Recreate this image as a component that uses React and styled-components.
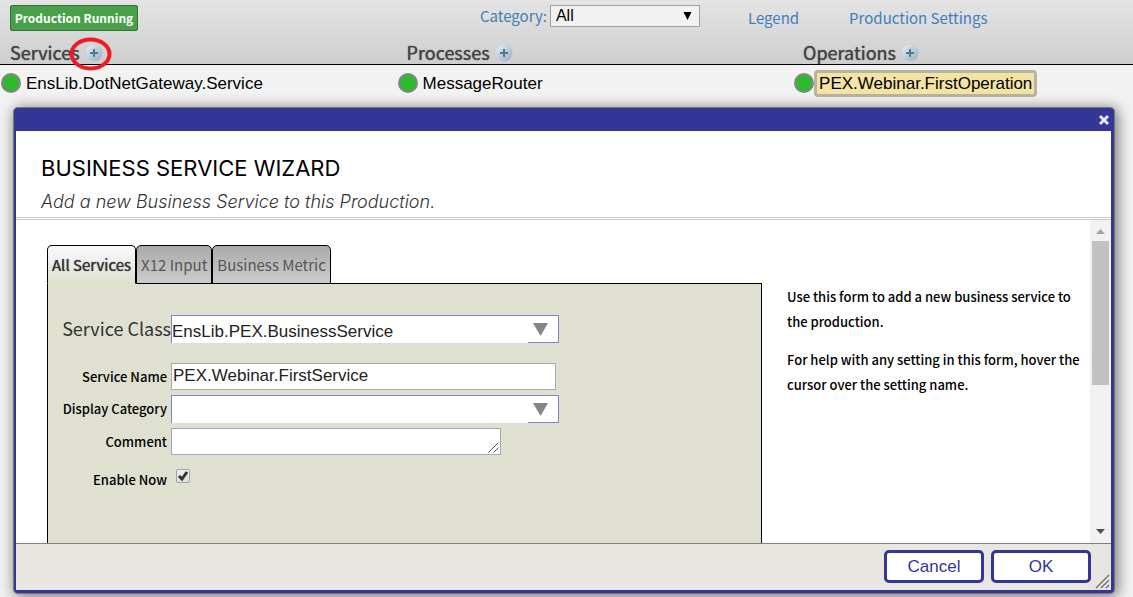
import styled, { createGlobalStyle } from "styled-components";

const colors = {
  navy: "#333695",
  link: "#3f7fb9",
  heading: "#444444",
  panel: "#dfe0d0",
  combo: "#8080cc",
};

const sourceSans = `"Noto Sans CJK SC", "Open Sans", sans-serif`;
const arial = `"Liberation Sans", Arial, sans-serif`;
const montserrat = `Inter, "Open Sans", sans-serif`;

const GlobalStyle = createGlobalStyle`
  * {
    box-sizing: border-box;
  }
  body {
    margin: 0;
    background: #f2f2f2;
    font-family: ${sourceSans};
    overflow: hidden;
  }
`;

const Page = styled.div`
  position: relative;
  height: 100vh;
`;

const Ribbon = styled.header`
  height: 65px;
  background: linear-gradient(#e4e4e4, #cecece);
  border-bottom: 1px solid #000;
`;

const Toolbar = styled.div`
  display: grid;
  grid-template-columns: 480fr 268fr 385fr;
  align-items: start;
  height: 40px;
  padding-top: 5px;
`;

const StatusButton = styled.button`
  width: 128px;
  height: 26px;
  margin-left: 10px;
  padding: 0;
  background: #48a148;
  border: 1px solid #3a6b3a;
  border-radius: 2px;
  color: #fff;
  font: bold 12px/24px ${sourceSans};
  white-space: nowrap;
`;

const Category = styled.div`
  display: flex;
  gap: 3px;
  color: ${colors.link};
  font-size: 15px;
  line-height: 22px;
`;

const CategorySelect = styled.span`
  position: relative;

  select {
    appearance: none;
    display: block;
    width: 150px;
    height: 22px;
    padding: 0 5px;
    background: #f2f2f2;
    border: 1px solid #a0a0a0;
    border-radius: 0;
    color: #000;
    font: 16px/20px ${arial};
  }
  svg {
    position: absolute;
    right: 8px;
    top: 7px;
    pointer-events: none;
  }
`;

const Links = styled.nav`
  display: flex;
  gap: 50px;
  line-height: 25px;
`;

const RibbonLink = styled.a`
  color: ${colors.link};
  font-size: 15px;
  text-decoration: none;
`;

const Columns = styled.div`
  display: grid;
  grid-template-columns: 35% 35% 30%;
`;

const ColumnTitle = styled.h2`
  position: relative;
  display: flex;
  align-items: center;
  gap: 4px;
  margin: 0;
  padding-left: 10px;
  color: ${colors.heading};
  font-size: 18px;
  font-weight: 400;
  line-height: 24px;
  text-shadow: 0 0 1px ${colors.heading};
`;

const AddButton = styled.button`
  display: flex;
  padding: 2px 0 0;
  background: none;
  border: 0;
`;

const Marker = styled.svg`
  position: absolute;
  left: 69px;
  top: -3px;
  pointer-events: none;
`;

const HostRow = styled.div`
  display: flex;
  align-items: center;
  height: 36px;
  padding-left: 1px;
`;

const Lamp = styled.span`
  width: 20px;
  height: 20px;
  background: #2dba2d;
  border: 2px solid #858585;
  border-radius: 50%;
`;

const HostName = styled.span`
  padding: 1px 2px 0;
  border: 3px solid ${(p) => (p.$selected ? "#b9b4a0" : "transparent")};
  border-radius: 4px;
  background: ${(p) => (p.$selected ? "#f3e3a5" : "none")};
  color: #000;
  font: 17px/20px ${arial};
`;

const Dialog = styled.section`
  position: absolute;
  inset: 108px 19px 4px 14px;
  display: flex;
  flex-direction: column;
  background: #fff;
  border: 2px solid ${colors.navy};
  border-width: 0 3px 3px 2px;
  border-radius: 4px;
  box-shadow: 0 0 0 1px #777, 2px 2px 14px 2px rgba(0, 0, 0, 0.5);
`;

const TitleBar = styled.div`
  display: flex;
  justify-content: flex-end;
  align-items: center;
  flex: none;
  height: 23px;
  padding-right: 1px;
  background: ${colors.navy};
`;

const CloseButton = styled.button`
  display: flex;
  padding: 0;
  background: none;
  border: 0;
`;

const DialogHeader = styled.div`
  flex: none;
  height: 89px;
  padding: 24px 25px 0;
  border-bottom: 3px double #c8c8c8;
`;

const Title = styled.h1`
  margin: 0;
  color: #000;
  font: 400 22px/26px ${montserrat};
`;

const Subtitle = styled.p`
  margin: 9px 0 0;
  color: #333;
  font: italic 300 18px/24px ${montserrat};
`;

const DialogBody = styled.div`
  display: flex;
  flex: 1;
  min-height: 0;
`;

const FormArea = styled.div`
  display: flex;
  flex-direction: column;
  flex: 1;
  padding: 25px 25px 0 31px;
`;

const Tabs = styled.div`
  display: flex;
  position: relative;
  margin-bottom: -1px;
`;

const Tab = styled.button`
  height: 39px;
  padding: 0 4px;
  background: ${(p) =>
    p.$active
      ? `linear-gradient(#f9f9ff, ${colors.panel})`
      : "linear-gradient(#aaaaaa, #cccccc)"};
  border: 1px solid #000;
  border-bottom-color: ${(p) => (p.$active ? colors.panel : "#000")};
  border-radius: 5px 5px 0 0;
  color: ${(p) => (p.$active ? "#333" : "#555")};
  font: 15px/36px ${sourceSans};
  text-shadow: ${(p) => (p.$active ? "0 0 1px #333" : "none")};
  white-space: nowrap;
`;

const Panel = styled.form`
  flex: 1;
  min-height: 0;
  padding-top: 31px;
  background: ${colors.panel};
  border: 1px solid #000;
  border-bottom: 0;
`;

const Field = styled.div`
  display: grid;
  grid-template-columns: 123px 1fr;
  align-items: ${(p) => (p.$spaced ? "start" : "center")};
  margin-bottom: ${(p) => (p.$spaced ? 20 : 5)}px;
`;

const Label = styled.label`
  padding-right: ${(p) => (p.$large ? 0 : 4)}px;
  color: ${(p) => (p.$large ? "#333" : "#000")};
  font-size: ${(p) => (p.$large ? 18 : 13)}px;
  font-weight: ${(p) => (p.$large ? 400 : 500)};
  line-height: 26px;
  text-align: right;
  white-space: nowrap;
`;

const Combo = styled.div`
  position: relative;
  width: 388px;

  select {
    appearance: none;
    display: block;
    width: 100%;
    height: 28px;
    padding: 4px 0 0;
    background: #fff;
    border: 1px solid ${colors.combo};
    border-bottom: 0;
    border-radius: 0;
    color: #222;
    font: 17px/22px ${arial};
  }
`;

const ComboArrow = styled.span`
  position: absolute;
  right: 0;
  bottom: 0;
  display: flex;
  justify-content: center;
  align-items: center;
  width: 31px;
  height: 27px;
  padding-right: 6px;
  border: solid ${colors.combo};
  border-width: 0 1px 1px 0;
  pointer-events: none;
`;

const TextInput = styled.input`
  display: block;
  width: 385px;
  height: 27px;
  padding: 0 1px 2px;
  background: #fff;
  border: 1px solid #a9a9a9;
  color: #222;
  font: 17px/24px ${arial};
`;

const CommentBox = styled.div`
  position: relative;
  width: 330px;

  textarea {
    display: block;
    width: 100%;
    height: 27px;
    padding: 2px;
    background: #fff;
    border: 1px solid #a9a9a9;
    font: 17px/20px ${arial};
    resize: none;
  }
  svg {
    position: absolute;
    right: 2px;
    bottom: 2px;
    pointer-events: none;
  }
`;

const Check = styled.span`
  position: relative;
  display: flex;
  width: 14px;
  height: 14px;
  margin: 0 0 8px 5px;

  input {
    appearance: none;
    width: 14px;
    height: 14px;
    margin: 0;
    background: linear-gradient(#eeeeee, #dddddd);
    border: 1px solid #a5a5a5;
    border-radius: 2px;
  }
  svg {
    position: absolute;
    inset: 0;
    pointer-events: none;
  }
  input:not(:checked) + svg {
    display: none;
  }
`;

const EnableField = styled(Field)`
  margin-top: 12px;
`;

const Help = styled.aside`
  flex: none;
  width: 303px;
  padding: 64px 0 0;
  color: #000;
  font-size: 13px;
  font-weight: 500;
  line-height: 25px;

  p {
    margin: 0 0 13px;
  }
`;

const ScrollBar = styled.div`
  display: flex;
  flex-direction: column;
  align-items: center;
  flex: none;
  width: 21px;
  padding: 9px 0;
  background: #f1f1f1;
`;

const Thumb = styled.div`
  width: 17px;
  height: 144px;
  margin: 7px 0 auto;
  background: #c1c1c1;
`;

const Footer = styled.div`
  position: relative;
  display: flex;
  justify-content: flex-end;
  gap: 7px;
  flex: none;
  height: 47px;
  padding: 6px 20px 0;
  background: #e8e6e1;
  border-top: 1px solid #80807c;
`;

const FooterButton = styled.button`
  width: 100px;
  height: 33px;
  padding: 0;
  background: #fff;
  border: 3px solid ${colors.navy};
  border-radius: 5px;
  color: ${colors.navy};
  font: 17px/26px ${arial};
`;

const Grip = styled.svg`
  position: absolute;
  right: 0;
  bottom: 1px;
`;

function AddIcon() {
  return (
    <svg width="20" height="20" viewBox="0 0 20 20">
      <defs>
        <linearGradient id="ball" x1="0" y1="0" x2="1" y2="1">
          <stop offset="0" stopColor="#eef2f4" />
          <stop offset="0.5" stopColor="#bfcdd7" />
          <stop offset="1" stopColor="#98aebc" />
        </linearGradient>
      </defs>
      <circle cx="10" cy="10" r="9" fill="url(#ball)" stroke="#c9d3d9" />
      <path d="M10 6v8M6 10h8" stroke="#4c7b98" strokeWidth="2" />
    </svg>
  );
}

function ComboBox({ id, value }) {
  return (
    <Combo>
      <select id={id} defaultValue={value}>
        <option value={value}>{value}</option>
      </select>
      <ComboArrow>
        <svg width="15" height="13" viewBox="0 0 15 13">
          <path d="M0 0h15L7.500 13z" fill="#858585" />
        </svg>
      </ComboArrow>
    </Combo>
  );
}

const hosts = [
  { title: "Services", name: "EnsLib.DotNetGateway.Service", marked: true },
  { title: "Processes", name: "MessageRouter" },
  { title: "Operations", name: "PEX.Webinar.FirstOperation", selected: true },
];

function App() {
  return (
    <Page>
      <GlobalStyle />
      <Ribbon>
        <Toolbar>
          <StatusButton type="button">Production Running</StatusButton>
          <Category>
            <label htmlFor="category">Category:</label>
            <CategorySelect>
              <select id="category">
                <option>All</option>
              </select>
              <svg width="9" height="8" viewBox="0 0 9 8">
                <path d="M0.500 0h8L4.500 8z" fill="#000" />
              </svg>
            </CategorySelect>
          </Category>
          <Links>
            <RibbonLink href="#legend">Legend</RibbonLink>
            <RibbonLink href="#settings">Production Settings</RibbonLink>
          </Links>
        </Toolbar>
        <Columns>
          {hosts.map((host) => (
            <ColumnTitle key={host.title}>
              {host.title}
              <AddButton type="button" aria-label={`Add to ${host.title}`}>
                <AddIcon />
              </AddButton>
              {host.marked && (
                <Marker width="43" height="35" viewBox="0 0 43 35">
                  <ellipse
                    cx="21.5"
                    cy="17"
                    rx="19"
                    ry="14.500"
                    fill="none"
                    stroke="#ed1c24"
                    strokeWidth="4"
                  />
                </Marker>
              )}
            </ColumnTitle>
          ))}
        </Columns>
      </Ribbon>
      <Columns>
        {hosts.map((host) => (
          <HostRow key={host.name}>
            <Lamp />
            <HostName $selected={host.selected}>{host.name}</HostName>
          </HostRow>
        ))}
      </Columns>

      <Dialog role="dialog" aria-labelledby="wizard-title">
        <TitleBar>
          <CloseButton type="button" aria-label="Close">
            <svg width="12" height="12" viewBox="0 0 12 12">
              <path d="M2 2l8 8M10 2l-8 8" stroke="#e4e4f2" strokeWidth="3" />
            </svg>
          </CloseButton>
        </TitleBar>
        <DialogHeader>
          <Title id="wizard-title">BUSINESS SERVICE WIZARD</Title>
          <Subtitle>Add a new Business Service to this Production.</Subtitle>
        </DialogHeader>
        <DialogBody>
          <FormArea>
            <Tabs role="tablist">
              <Tab type="button" role="tab" aria-selected="true" $active>
                All Services
              </Tab>
              <Tab type="button" role="tab">
                X12 Input
              </Tab>
              <Tab type="button" role="tab">
                Business Metric
              </Tab>
            </Tabs>
            <Panel>
              <Field $spaced>
                <Label htmlFor="service-class" $large>
                  Service Class
                </Label>
                <ComboBox id="service-class" value="EnsLib.PEX.BusinessService" />
              </Field>
              <Field>
                <Label htmlFor="service-name">Service Name</Label>
                <TextInput
                  id="service-name"
                  defaultValue="PEX.Webinar.FirstService"
                />
              </Field>
              <Field>
                <Label htmlFor="display-category">Display Category</Label>
                <ComboBox id="display-category" value="" />
              </Field>
              <Field>
                <Label htmlFor="comment">Comment</Label>
                <CommentBox>
                  <textarea id="comment" />
                  <svg width="11" height="11" viewBox="0 0 11 11">
                    <path
                      d="M0.500 10.500l10-10M5.500 10.500l5-5"
                      stroke="#555"
                      fill="none"
                    />
                  </svg>
                </CommentBox>
              </Field>
              <EnableField>
                <Label htmlFor="enable">Enable Now</Label>
                <Check>
                  <input id="enable" type="checkbox" defaultChecked />
                  <svg width="14" height="14" viewBox="0 0 14 14">
                    <path
                      d="M3 7l3 3 5-7"
                      stroke="#333"
                      strokeWidth="3"
                      fill="none"
                    />
                  </svg>
                </Check>
              </EnableField>
            </Panel>
          </FormArea>
          <Help>
            <p>Use this form to add a new business service to the production.</p>
            <p>
              For help with any setting in this form, hover the cursor over the
              setting name.
            </p>
          </Help>
          <ScrollBar>
            <svg width="9" height="5" viewBox="0 0 9 5">
              <path d="M0 5h9L4.500 0z" fill="#a3a3a3" />
            </svg>
            <Thumb />
            <svg width="9" height="5" viewBox="0 0 9 5">
              <path d="M0 0h9L4.500 5z" fill="#505050" />
            </svg>
          </ScrollBar>
        </DialogBody>
        <Footer>
          <FooterButton type="button">Cancel</FooterButton>
          <FooterButton type="button">OK</FooterButton>
          <Grip width="16" height="15" viewBox="0 0 16 15">
            <path
              d="M1 14l13-13M6 14l8-8M11 14l3-3"
              stroke="#777"
              strokeWidth="1.500"
              fill="none"
            />
          </Grip>
        </Footer>
      </Dialog>
    </Page>
  );
}

export default App;
